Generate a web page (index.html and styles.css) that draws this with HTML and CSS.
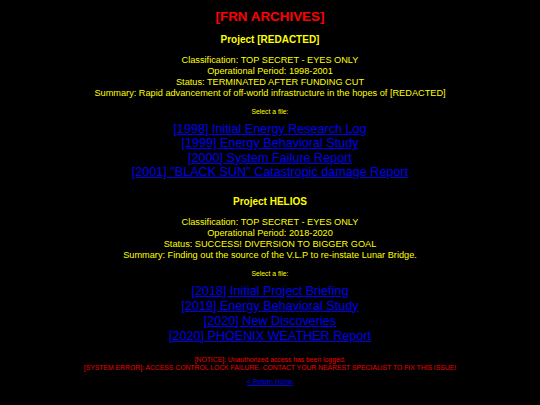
FILE: index.html
```html
<!DOCTYPE html>
<html>
<head>
<meta charset="utf-8">
<link rel="stylesheet" href="styles.css">
</head>
<body>
<main class="page">
  <h1 class="title">[FRN ARCHIVES]</h1>

  <section class="project">
    <h2 class="project-name">Project [REDACTED]</h2>
    <div class="info">
      <p>Classification: TOP SECRET - EYES ONLY</p>
      <p>Operational Period: 1998-2001</p>
      <p>Status: TERMINATED AFTER FUNDING CUT</p>
      <p>Summary: Rapid advancement of off-world infrastructure in the hopes of [REDACTED]</p>
    </div>
    <p class="select">Select a file:</p>
    <ul class="files">
      <li><a href="#">[1998] Initial Energy Research Log</a></li>
      <li><a href="#">[1999] Energy Behavioral Study</a></li>
      <li><a href="#">[2000] System Failure Report</a></li>
      <li><a href="#">[2001] "BLACK SUN" Catastropic damage Report</a></li>
    </ul>
  </section>

  <section class="project second">
    <h2 class="project-name">Project HELIOS</h2>
    <div class="info">
      <p>Classification: TOP SECRET - EYES ONLY</p>
      <p>Operational Period: 2018-2020</p>
      <p>Status: SUCCESS! DIVERSION TO BIGGER GOAL</p>
      <p>Summary: Finding out the source of the V.L.P to re-instate Lunar Bridge.</p>
    </div>
    <p class="select">Select a file:</p>
    <ul class="files">
      <li><a href="#">[2018] Initial Project Briefing</a></li>
      <li><a href="#">[2019] Energy Behavioral Study</a></li>
      <li><a href="#">[2020] New Discoveries</a></li>
      <li><a href="#">[2020] PHOENIX WEATHER Report</a></li>
    </ul>
  </section>

  <footer class="footer">
    <p class="alert">[NOTICE]: Unauthorized access has been logged.</p>
    <p class="alert">[SYSTEM ERROR]: ACCESS CONTROL LOCK FAILURE. CONTACT YOUR NEAREST SPECIALIST TO FIX THIS ISSUE!</p>
    <p class="home"><a href="#">&lt; Return Home</a></p>
  </footer>
</main>
</body>
</html>
```

FILE: styles.css
```css
html, body {
  margin: 0;
  padding: 0;
  background: #000;
}
body {
  font-family: "Liberation Sans", Arial, sans-serif;
  color: #ffff00;
  text-align: center;
}
.page {
  display: flex;
  flex-direction: column;
  align-items: center;
  padding-top: 9px;
}
p, ul, h1, h2 {
  margin: 0;
  padding: 0;
}
.title {
  color: #ff0000;
  font-size: 13.4px;
  line-height: 16px;
  font-weight: bold;
}
.project {
  display: flex;
  flex-direction: column;
  align-items: center;
  margin-top: 9px;
}
.project.second {
  margin-top: 16px;
}
.project-name {
  font-size: 10px;
  line-height: 12px;
  font-weight: bold;
}
.info {
  margin-top: 9px;
  font-size: 9.2px;
  line-height: 11px;
}
.select {
  margin-top: 9px;
  font-size: 6.8px;
  line-height: 8px;
}
.files {
  list-style: none;
  margin-top: 6px;
  font-size: 12.6px;
  line-height: 14.4px;
}
.second .files {
  line-height: 15px;
}
a {
  color: #0000ee;
}
.footer {
  margin-top: 12.5px;
  font-size: 6.8px;
  line-height: 8px;
}
.alert {
  color: #ee0000;
}
.home {
  margin-top: 6px;
}
```
